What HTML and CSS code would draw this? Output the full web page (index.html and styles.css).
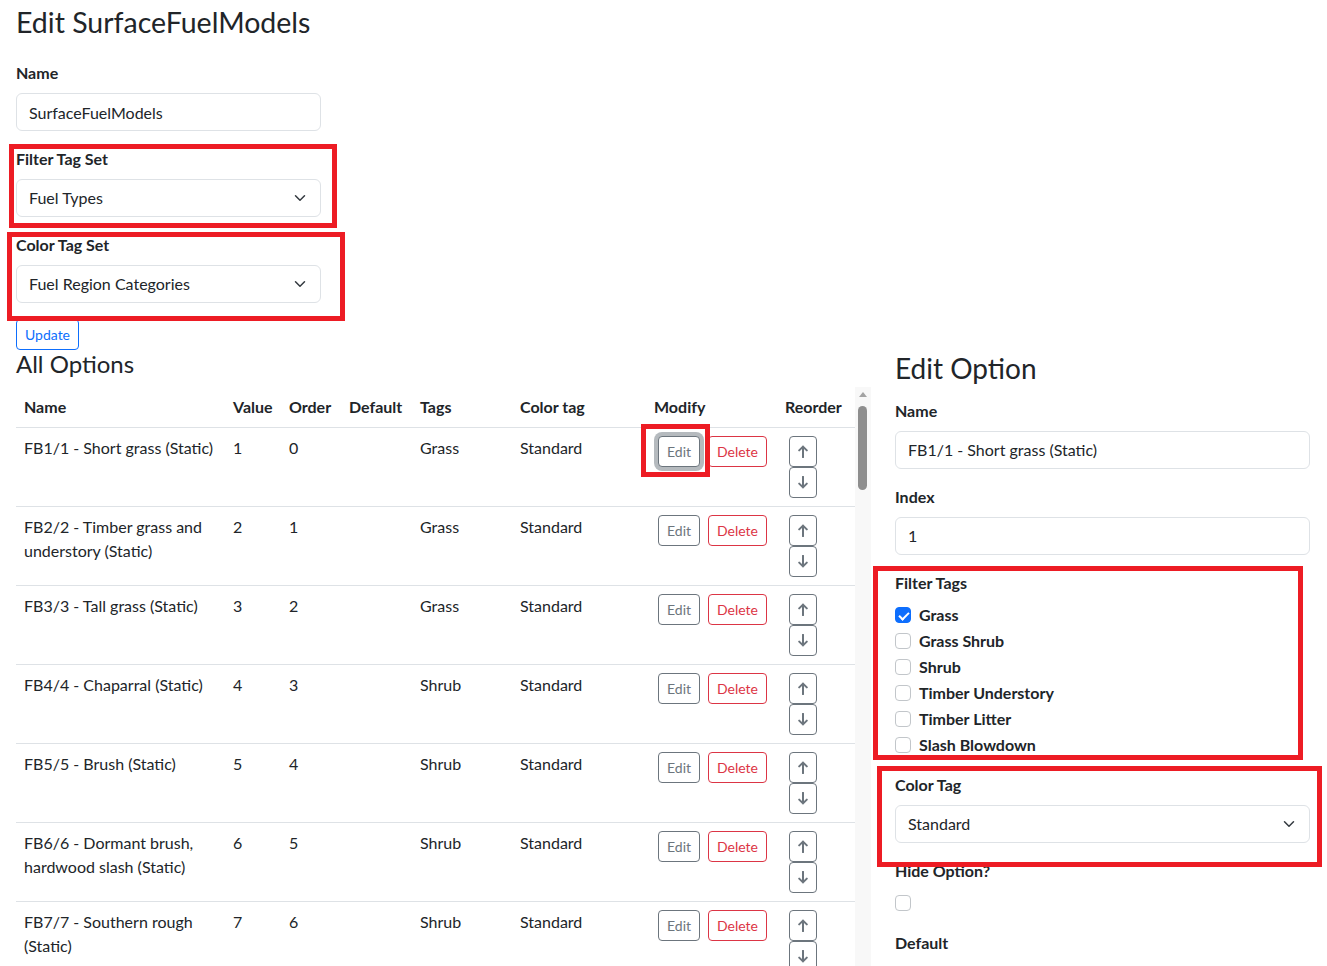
FILE: index.html
```html
<!DOCTYPE html>
<html lang="en">
<head>
<meta charset="utf-8">
<title>Edit SurfaceFuelModels</title>
<link rel="stylesheet" href="styles.css">
</head>
<body>
<div class="page">
  <h2 class="page-title">Edit SurfaceFuelModels</h2>

  <form class="set-form">
    <div class="field">
      <label class="form-label" for="set-name">Name</label>
      <input class="form-control" id="set-name" type="text" value="SurfaceFuelModels">
    </div>
    <div class="field">
      <label class="form-label" for="filter-set">Filter Tag Set</label>
      <div class="select-wrap">
        <select class="form-select" id="filter-set"><option>Fuel Types</option></select>
        <svg class="chevron" viewBox="0 0 16 16"><path fill="none" stroke="#343a40" stroke-linecap="round" stroke-linejoin="round" stroke-width="2" d="m2 5 6 6 6-6"/></svg>
      </div>
    </div>
    <div class="field">
      <label class="form-label" for="color-set">Color Tag Set</label>
      <div class="select-wrap">
        <select class="form-select" id="color-set"><option>Fuel Region Categories</option></select>
        <svg class="chevron" viewBox="0 0 16 16"><path fill="none" stroke="#343a40" stroke-linecap="round" stroke-linejoin="round" stroke-width="2" d="m2 5 6 6 6-6"/></svg>
      </div>
    </div>
    <div class="form-actions">
      <button type="button" class="btn btn-outline-primary">Update</button>
    </div>
  </form>

  <div class="options-row">
    <section class="all-options">
      <h4 class="section-title-sm">All Options</h4>
      <div class="table-frame">
        <div class="table-scroll">
          <table class="options-table">
            <colgroup>
              <col class="c-name"><col class="c-value"><col class="c-order"><col class="c-default">
              <col class="c-tags"><col class="c-color"><col class="c-modify"><col class="c-reorder">
            </colgroup>
            <thead>
              <tr>
                <th>Name</th><th>Value</th><th>Order</th><th>Default</th>
                <th>Tags</th><th>Color tag</th><th>Modify</th><th>Reorder</th>
              </tr>
            </thead>
            <tbody id="options-body"></tbody>
          </table>
        </div>
        <div class="scrollbar" aria-hidden="true">
          <span class="scrollbar-arrow"></span>
          <span class="scrollbar-thumb"></span>
        </div>
      </div>
    </section>

    <section class="edit-option">
      <h3 class="section-title">Edit Option</h3>
      <div class="field">
        <label class="form-label" for="opt-name">Name</label>
        <input class="form-control" id="opt-name" type="text" value="FB1/1 - Short grass (Static)">
      </div>
      <div class="field">
        <label class="form-label" for="opt-index">Index</label>
        <input class="form-control" id="opt-index" type="text" value="1">
      </div>
      <div class="field">
        <div class="form-label">Filter Tags</div>
        <div class="check-list">
          <label class="form-check"><input class="form-check-input" type="checkbox" checked>Grass</label>
          <label class="form-check"><input class="form-check-input" type="checkbox">Grass Shrub</label>
          <label class="form-check"><input class="form-check-input" type="checkbox">Shrub</label>
          <label class="form-check"><input class="form-check-input" type="checkbox">Timber Understory</label>
          <label class="form-check"><input class="form-check-input" type="checkbox">Timber Litter</label>
          <label class="form-check"><input class="form-check-input" type="checkbox">Slash Blowdown</label>
        </div>
      </div>
      <div class="field">
        <label class="form-label" for="opt-color">Color Tag</label>
        <div class="select-wrap">
          <select class="form-select" id="opt-color"><option>Standard</option></select>
          <svg class="chevron" viewBox="0 0 16 16"><path fill="none" stroke="#343a40" stroke-linecap="round" stroke-linejoin="round" stroke-width="2" d="m2 5 6 6 6-6"/></svg>
        </div>
      </div>
      <div class="field">
        <div class="form-label">Hide Option?</div>
        <label class="form-check"><input class="form-check-input" type="checkbox"></label>
      </div>
      <div class="field">
        <div class="form-label">Default</div>
      </div>
    </section>
  </div>
</div>

<div class="annotations" aria-hidden="true">
  <div class="annot annot-filter-set"></div>
  <div class="annot annot-color-set"></div>
  <div class="annot annot-edit-btn"></div>
  <div class="annot annot-filter-tags"></div>
  <div class="annot annot-color-tag"></div>
</div>

<script src="app.js"></script>
</body>
</html>
```
FILE: styles.css
```css
* { box-sizing: border-box; }

html, body { overflow: hidden; }

body {
  margin: 0;
  font-family: Lato, "Liberation Sans", sans-serif;
  font-size: 16px;
  line-height: 1.5;
  color: #212529;
  background: #fff;
}

.page {
  padding: 5px 17px 0 16px;
}

.page-title {
  font-size: 28.5px;
  font-weight: 400;
  line-height: 1.2;
  margin: 0 0 22px;
}

.set-form { width: 305px; }

.field { margin-bottom: 16px; }

.form-label {
  display: block;
  font-weight: 700;
  margin-bottom: 8px;
}

.form-control,
.form-select {
  display: block;
  width: 100%;
  height: 38px;
  padding: 6px 12px;
  font: inherit;
  color: #212529;
  background: #fff;
  border: 1px solid #dee2e6;
  border-radius: 6px;
  outline: none;
}

.form-select {
  appearance: none;
  -webkit-appearance: none;
  padding-right: 36px;
}

.select-wrap { position: relative; }

.select-wrap .chevron {
  position: absolute;
  right: 13px;
  top: 13px;
  width: 16px;
  height: 12px;
  pointer-events: none;
}

.form-actions { display: flex; }

.btn {
  display: inline-flex;
  align-items: center;
  justify-content: center;
  font-family: inherit;
  font-size: 14px;
  line-height: 1.5;
  padding: 4px 8px;
  border: 1px solid;
  border-radius: 4px;
  background: #fff;
  cursor: pointer;
}

.btn-outline-primary { color: #0d6efd; border-color: #0d6efd; }
.btn-outline-secondary { color: #6c757d; border-color: #6c757d; }
.btn-outline-danger { color: #dc3545; border-color: #dc3545; }

.btn.is-focused { box-shadow: 0 0 0 4px rgba(108, 117, 125, 0.5); }

.btn-icon {
  height: 31px;
  padding: 0 8px;
}
.btn-icon svg { display: block; width: 10px; height: 13px; }

/* ---------- options row ---------- */
.options-row {
  display: grid;
  grid-template-columns: 855px 415px;
  column-gap: 24px;
  align-items: start;
}

.section-title-sm {
  font-size: 24px;
  font-weight: 400;
  line-height: 1.2;
  margin: 0 0 8px;
}

.section-title {
  font-size: 28px;
  font-weight: 400;
  line-height: 1.2;
  margin: 2px 0 13px;
}

.table-frame {
  display: flex;
  height: 580px;
}

.table-scroll {
  flex: 1;
  min-width: 0;
  overflow: hidden;
}

.scrollbar {
  flex: 0 0 16px;
  display: flex;
  flex-direction: column;
  align-items: center;
  background: #f8f8f8;
}

.scrollbar-arrow {
  margin-top: 5px;
  width: 0;
  height: 0;
  border-left: 4.5px solid transparent;
  border-right: 4.5px solid transparent;
  border-bottom: 5px solid #a3a3a3;
}

.scrollbar-thumb {
  margin-top: 9px;
  margin-right: 2px;
  width: 9px;
  height: 84px;
  border-radius: 5px;
  background: #8e8e8e;
}

.options-table {
  width: 100%;
  border-collapse: collapse;
  table-layout: fixed;
}

.c-name { width: 209px; }
.c-value { width: 56px; }
.c-order { width: 60px; }
.c-default { width: 71px; }
.c-tags { width: 100px; }
.c-color { width: 134px; }
.c-modify { width: 131px; }
.c-reorder { width: 78px; }

.options-table th,
.options-table td {
  padding: 8px;
  text-align: left;
  vertical-align: top;
  border-bottom: 1px solid #dee2e6;
}

.options-table th {
  font-weight: 700;
  vertical-align: bottom;
}

.modify {
  display: flex;
  align-items: flex-start;
  gap: 8px;
  padding-left: 4px;
}

.reorder {
  display: flex;
  flex-direction: column;
  align-items: flex-start;
  padding-left: 4px;
}

/* ---------- checks ---------- */
.check-list .form-check:last-child { margin-bottom: 0; }

.form-check {
  display: block;
  min-height: 24px;
  padding-left: 24px;
  margin-bottom: 2px;
  font-weight: 700;
}

.form-check-input {
  appearance: none;
  -webkit-appearance: none;
  float: left;
  position: relative;
  width: 16px;
  height: 16px;
  margin: 4px 0 0 -24px;
  background: #fff;
  border: 1px solid #c2c6ca;
  border-radius: 4px;
}

.form-check-input:checked {
  background: #0d6efd;
  border-color: #0d6efd;
}

.form-check-input:checked::before {
  content: "";
  position: absolute;
  left: 5px;
  top: 2px;
  width: 4px;
  height: 8px;
  border: solid #fff;
  border-width: 0 2px 2px 0;
  transform: rotate(45deg);
}

/* ---------- annotation overlay ---------- */
.annotations {
  position: absolute;
  inset: 0;
  pointer-events: none;
}

.annot {
  position: absolute;
  border: 5px solid #ed1c24;
}

.annot-filter-set { left: 9px; top: 144px; width: 328px; height: 84px; }
.annot-color-set { left: 7px; top: 232px; width: 338px; height: 89px; }
.annot-edit-btn { left: 641px; top: 424px; width: 69px; height: 53px; }
.annot-filter-tags { left: 873px; top: 566px; width: 430px; height: 194px; }
.annot-color-tag { left: 877px; top: 766px; width: 445px; height: 101px; }
```
FILE: app.js
```js
(function () {
  var options = [
    ["Short grass", "Grass"],
    ["Timber grass and understory", "Grass"],
    ["Tall grass", "Grass"],
    ["Chaparral", "Shrub"],
    ["Brush", "Shrub"],
    ["Dormant brush, hardwood slash", "Shrub"],
    ["Southern rough", "Shrub"]
  ];

  var up = '<svg viewBox="0 0 10 13"><path d="M5 12.2V1.6M1.2 5.4 5 1.6l3.8 3.8" fill="none" stroke="currentColor" stroke-width="2" stroke-linecap="round" stroke-linejoin="round"/></svg>';
  var down = '<svg viewBox="0 0 10 13"><path d="M5 0.8v10.6M1.2 7.6 5 11.4l3.8-3.8" fill="none" stroke="currentColor" stroke-width="2" stroke-linecap="round" stroke-linejoin="round"/></svg>';

  var html = "";
  options.forEach(function (o, i) {
    var n = i + 1;
    var name = "FB" + n + "/" + n + " - " + o[0] + " (Static)";
    html += "<tr>" +
      "<td>" + name + "</td>" +
      "<td>" + n + "</td>" +
      "<td>" + i + "</td>" +
      "<td></td>" +
      "<td>" + o[1] + "</td>" +
      "<td>Standard</td>" +
      '<td><div class="modify">' +
        '<button type="button" class="btn btn-outline-secondary' + (i === 0 ? " is-focused" : "") + '">Edit</button>' +
        '<button type="button" class="btn btn-outline-danger">Delete</button>' +
      "</div></td>" +
      '<td><div class="reorder">' +
        '<button type="button" class="btn btn-outline-secondary btn-icon" aria-label="Move up">' + up + "</button>" +
        '<button type="button" class="btn btn-outline-secondary btn-icon" aria-label="Move down">' + down + "</button>" +
      "</div></td>" +
      "</tr>";
  });
  document.getElementById("options-body").innerHTML = html;
})();
```
